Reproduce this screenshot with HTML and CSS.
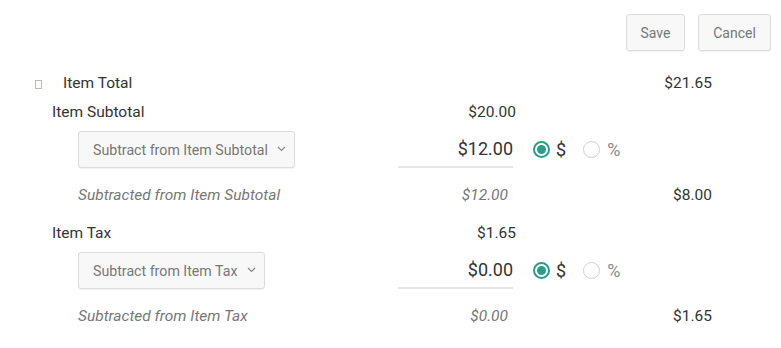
FILE: index.html
```html
<!DOCTYPE html>
<html>
<head>
<meta charset="utf-8">
<link rel="stylesheet" href="styles.css">
</head>
<body>
<div class="page">
  <div class="toolbar">
    <button class="btn btn-save">Save</button>
    <button class="btn btn-cancel">Cancel</button>
  </div>
  <div class="lines">
    <div class="row row-total">
      <div class="c1"><span class="box"></span><span class="total-label">Item Total</span></div>
      <div class="c2"></div>
      <div class="c3 right">$21.65</div>
    </div>

    <div class="row row-head">
      <div class="c1 indent1">Item Subtotal</div>
      <div class="c2 right">$20.00</div>
      <div class="c3"></div>
    </div>
    <div class="row row-edit">
      <div class="c1 indent2">
        <div class="select select-wide"><span>Subtract from Item Subtotal</span><svg class="chev" width="9" height="6" viewBox="0 0 9 6"><path d="M1 1l3.5 3.5L8 1" fill="none" stroke="#888" stroke-width="1.2"/></svg></div>
      </div>
      <div class="c2"><div class="amount-input">$12.00</div></div>
      <div class="c3 radios">
        <span class="radio on"></span><span class="rlabel on">$</span>
        <span class="radio"></span><span class="rlabel">%</span>
      </div>
    </div>
    <div class="row row-result">
      <div class="c1 indent2 italic">Subtracted from Item Subtotal</div>
      <div class="c2 right italic pr8">$12.00</div>
      <div class="c3 right">$8.00</div>
    </div>

    <div class="row row-head row-tax">
      <div class="c1 indent1">Item Tax</div>
      <div class="c2 right">$1.65</div>
      <div class="c3"></div>
    </div>
    <div class="row row-edit">
      <div class="c1 indent2">
        <div class="select select-narrow"><span>Subtract from Item Tax</span><svg class="chev" width="9" height="6" viewBox="0 0 9 6"><path d="M1 1l3.5 3.5L8 1" fill="none" stroke="#888" stroke-width="1.2"/></svg></div>
      </div>
      <div class="c2"><div class="amount-input">$0.00</div></div>
      <div class="c3 radios">
        <span class="radio on"></span><span class="rlabel on">$</span>
        <span class="radio"></span><span class="rlabel">%</span>
      </div>
    </div>
    <div class="row row-result">
      <div class="c1 indent2 italic">Subtracted from Item Tax</div>
      <div class="c2 right italic pr8">$0.00</div>
      <div class="c3 right">$1.65</div>
    </div>
  </div>
</div>
</body>
</html>
```

FILE: styles.css
```css
* { box-sizing: border-box; }
html, body { margin: 0; padding: 0; background: #fff; }
body {
  font-family: Roboto, "Liberation Sans", sans-serif;
  color: #333;
  font-size: 15.5px;
}
.page { width: 781px; height: 348px; overflow: hidden; }
.toolbar {
  display: flex;
  justify-content: flex-end;
  gap: 13px;
  padding: 14px 10px 0 0;
}
.btn {
  height: 37px;
  border: 1px solid #dcdcdc;
  border-radius: 3px;
  background: #f8f8f8;
  color: #777;
  font-family: Roboto, "Liberation Sans", sans-serif;
  font-size: 14px;
  box-shadow: 0 1px 1px rgba(0,0,0,0.05);
  padding: 0;
}
.btn-save { width: 59px; }
.btn-cancel { width: 73px; }

.lines { width: 712px; margin-top: 18px; }
.row {
  display: grid;
  grid-template-columns: 398px 118px 196px;
  align-items: center;
}
.row-total, .row-head, .row-result { height: 28px; }
.row-edit { height: 37px; margin-top: 5px; }
.row-result { margin-top: 13px; }
.row-head { margin-top: 1px; }
.row-head.row-tax { margin-top: 10px; }

.c1 { display: flex; align-items: center; }
.right { text-align: right; }
.indent1 { padding-left: 52px; }
.indent2 { padding-left: 78px; }
.italic { font-style: italic; color: #777; }
.pr8 { padding-right: 8px; }

.box {
  display: inline-block;
  width: 7px;
  height: 9px;
  border: 1px solid #c9b4b4;
  margin-left: 35px;
  margin-top: 2px;
}
.total-label { margin-left: 21px; }

.select {
  height: 37px;
  border: 1px solid #dcdcdc;
  border-radius: 3px;
  background: #f8f8f8;
  box-shadow: 0 1px 1px rgba(0,0,0,0.05);
  display: flex;
  align-items: center;
  padding-left: 14px;
  color: #777;
  font-size: 14.2px;
}
.select-wide { width: 217px; }
.select-narrow { width: 187px; }
.chev { margin-left: 9px; margin-top: -2px; }

.amount-input {
  width: 115px;
  height: 37px;
  border-bottom: 2px solid #e6e6e6;
  text-align: right;
  font-size: 18px;
  line-height: 35px;
  color: #333;
}
.c2 { align-self: stretch; }

.radios {
  display: flex;
  align-items: center;
  padding-left: 17px;
}
.radio {
  width: 17px;
  height: 17px;
  border-radius: 50%;
  border: 1.5px solid #cfcfcf;
  background: #fff;
  position: relative;
}
.radio.on { border: 2px solid #2a9d8a; }
.radio.on::after {
  content: "";
  position: absolute;
  left: 2px; top: 2px;
  width: 9px; height: 9px;
  border-radius: 50%;
  background: #2a9d8a;
}
.rlabel { font-size: 18px; color: #888; margin-left: 7px; }
.rlabel.on { color: #333; margin-left: 6px; margin-right: 17px; }
.row-head .c2, .row-result .c2 { display: flex; align-items: center; justify-content: flex-end; }
```
